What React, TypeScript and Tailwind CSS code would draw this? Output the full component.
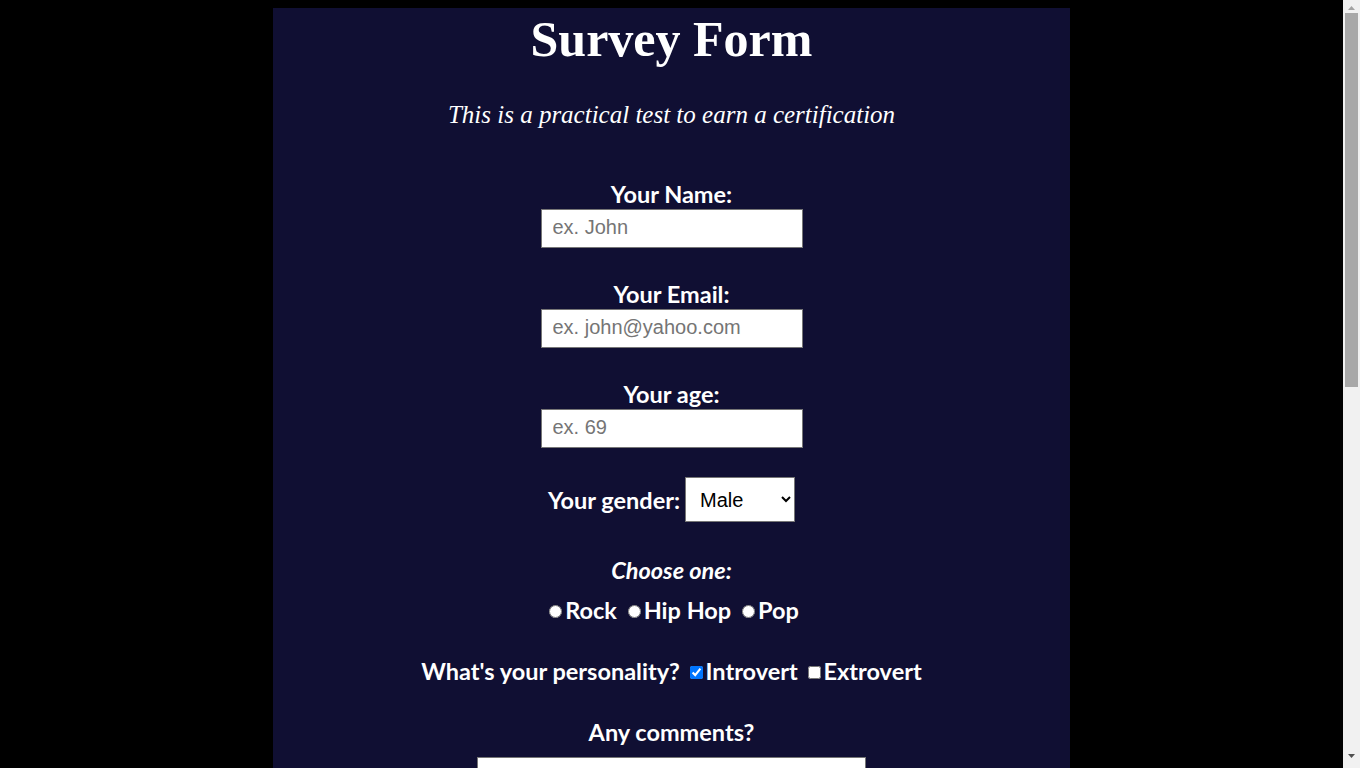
import React from "react";

const serif = { fontFamily: '"Liberation Serif", "Times New Roman", serif' };
const arial = { fontFamily: '"Liberation Sans", Arial, sans-serif' };

function Scrollbar() {
  return (
    <div className="w-[17px] h-full shrink-0 bg-[#f1f1f1] flex flex-col">
      <div className="h-[13px] flex items-start justify-center pt-[6px]">
        <svg width="7" height="4" viewBox="0 0 7 4">
          <path d="M3.5 0 L7 4 L0 4 Z" fill="#a3a3a3" />
        </svg>
      </div>
      <div className="mx-[2px] h-[374px] bg-[#a8a8a8]" />
      <div className="flex-1" />
      <div className="h-[17px] flex items-start justify-center pt-[3px]">
        <svg width="7" height="4" viewBox="0 0 7 4">
          <path d="M0 0 L7 0 L3.5 4 Z" fill="#505050" />
        </svg>
      </div>
    </div>
  );
}

export default function App() {
  const labelCls =
    "text-[23.5px] font-bold leading-[28px] text-white text-center";
  const inputCls =
    "block w-[262px] h-[39px] bg-white border border-[#767676] pl-[11px] pb-[3px] text-[20px] text-black placeholder:text-[#757575]";
  return (
    <div className="h-[768px] w-full flex overflow-hidden bg-black" style={{ fontFamily: 'Lato, "Open Sans", sans-serif' }}>
      <div className="flex-1 h-full overflow-hidden p-2">
        <div className="mx-auto w-[797px] bg-[#100f33] text-white h-[1492px] flex flex-col items-center">
          <h1 className="pt-[2px] text-[50px] leading-[58px] font-bold" style={serif}>
            Survey Form
          </h1>
          <p className="mt-[33px] text-[25px] leading-[28px] italic" style={serif}>
            This is a practical test to earn a certification
          </p>

          <form className="flex flex-col items-center" onSubmit={(e) => e.preventDefault()}>
            <label className={`mt-[51px] ${labelCls}`} htmlFor="name">Your Name:</label>
            <input id="name" type="text" placeholder="ex. John" className={`mt-[1px] ${inputCls}`} style={arial} />

            <label className={`mt-[32px] ${labelCls}`} htmlFor="email">Your Email:</label>
            <input id="email" type="email" placeholder="ex. john@yahoo.com" className={`mt-[1px] ${inputCls}`} style={arial} />

            <label className={`mt-[32px] ${labelCls}`} htmlFor="age">Your age:</label>
            <input id="age" type="text" placeholder="ex. 69" className={`mt-[1px] ${inputCls}`} style={arial} />

            <div className="mt-[29px] flex items-center h-[45px]">
              <label className={labelCls} htmlFor="gender">Your gender:</label>
              <select
                id="gender"
                defaultValue="Male"
                className="ml-[5px] w-[110px] h-[45px] bg-white text-black border border-[#767676] pl-[10px] text-[20px]"
                style={arial}
              >
                <option>Male</option>
                <option>Female</option>
                <option>Other</option>
              </select>
            </div>

            <div className={`mt-[34px] italic ${labelCls}`}>Choose one:</div>
            <div className={`mt-[12px] flex items-center ${labelCls}`}>
              <input type="radio" name="music" className="ml-[5px] mr-[3px] mt-[2px] w-[13px] h-[13px]" />
              <span>Rock</span>
              <span>&nbsp;</span>
              <input type="radio" name="music" className="ml-[5px] mr-[3px] mt-[2px] w-[13px] h-[13px]" />
              <span>Hip Hop</span>
              <span>&nbsp;</span>
              <input type="radio" name="music" className="ml-[5px] mr-[3px] mt-[2px] w-[13px] h-[13px]" />
              <span>Pop</span>
            </div>

            <div className={`mt-[33px] flex items-center ${labelCls}`}>
              <span>What's your personality?</span>
              <span>&nbsp;</span>
              <input type="checkbox" defaultChecked className="ml-[4px] mr-[3px] mt-[2px] w-[13px] h-[13px]" />
              <span>Introvert</span>
              <span>&nbsp;</span>
              <input type="checkbox" className="ml-[4px] mr-[3px] mt-[2px] w-[13px] h-[13px]" />
              <span>Extrovert</span>
            </div>

            <label className={`mt-[33px] ${labelCls}`} htmlFor="comments">Any comments?</label>
            <textarea
              id="comments"
              className="mt-[11px] block w-[389px] h-[160px] bg-white border border-[#767676] text-black"
            />
            <button
              type="submit"
              className="mt-[40px] px-6 py-2 bg-white text-black text-[20px] border border-[#767676]"
            >
              Submit
            </button>
          </form>
        </div>
      </div>
      <Scrollbar />
    </div>
  );
}
